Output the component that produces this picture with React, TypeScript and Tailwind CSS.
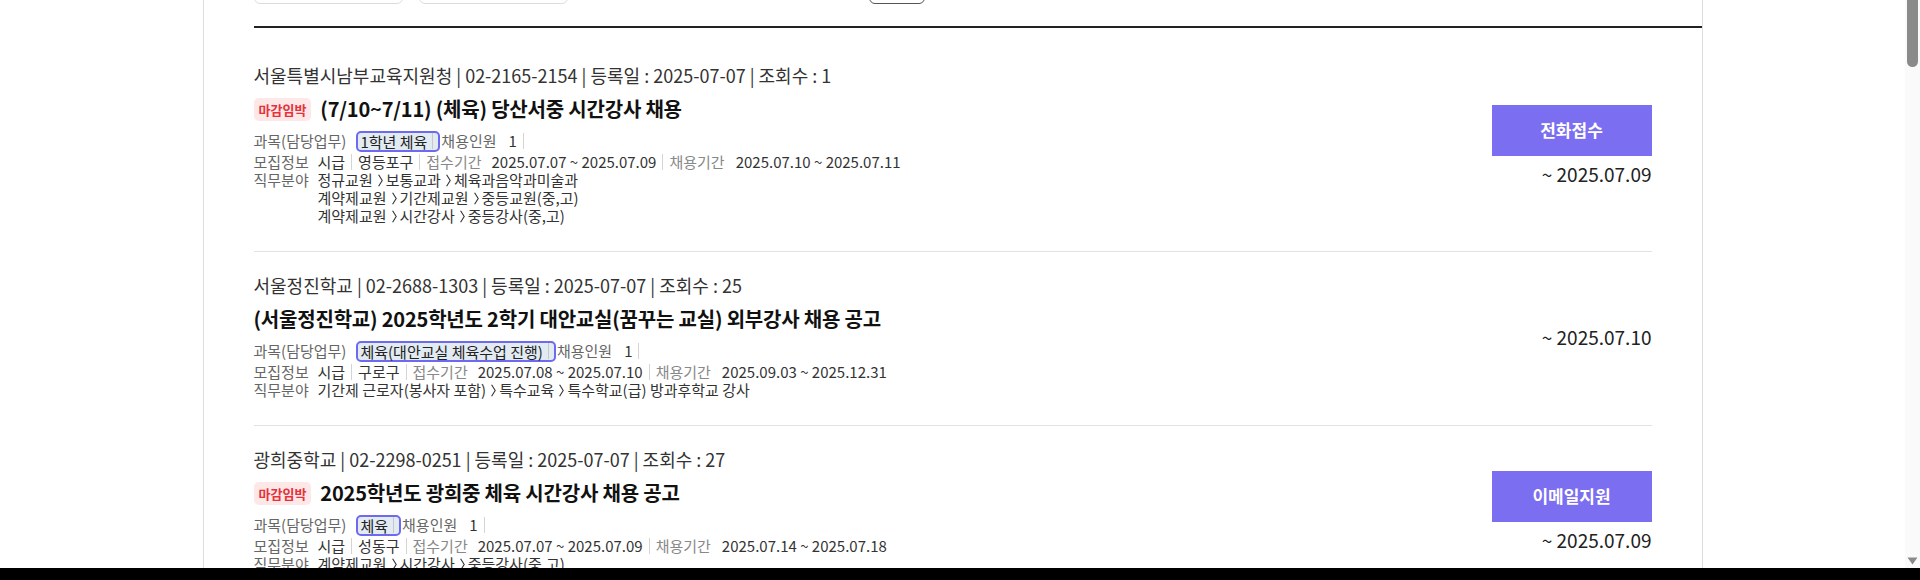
import React from "react";

type Job = {
  meta: string;
  urgent: boolean;
  title: string;
  subject: string;
  count: string;
  pay: string;
  region: string;
  apply: string;
  work: string;
  fields: string[][];
  action?: string;
  deadline: string;
};

const jobs: Job[] = [
  {
    meta: "서울특별시남부교육지원청 | 02-2165-2154 | 등록일 : 2025-07-07 | 조회수 : 1",
    urgent: true,
    title: "(7/10~7/11) (체육) 당산서중 시간강사 채용",
    subject: "1학년 체육",
    count: "1",
    pay: "시급",
    region: "영등포구",
    apply: "2025.07.07 ~ 2025.07.09",
    work: "2025.07.10 ~ 2025.07.11",
    fields: [
      ["정규교원", "보통교과", "체육과음악과미술과"],
      ["계약제교원", "기간제교원", "중등교원(중,고)"],
      ["계약제교원", "시간강사", "중등강사(중,고)"],
    ],
    action: "전화접수",
    deadline: "~ 2025.07.09",
  },
  {
    meta: "서울정진학교 | 02-2688-1303 | 등록일 : 2025-07-07 | 조회수 : 25",
    urgent: false,
    title: "(서울정진학교) 2025학년도 2학기 대안교실(꿈꾸는 교실) 외부강사 채용 공고",
    subject: "체육(대안교실 체육수업 진행)",
    count: "1",
    pay: "시급",
    region: "구로구",
    apply: "2025.07.08 ~ 2025.07.10",
    work: "2025.09.03 ~ 2025.12.31",
    fields: [["기간제 근로자(봉사자 포함)", "특수교육", "특수학교(급) 방과후학교 강사"]],
    deadline: "~ 2025.07.10",
  },
  {
    meta: "광희중학교 | 02-2298-0251 | 등록일 : 2025-07-07 | 조회수 : 27",
    urgent: true,
    title: "2025학년도 광희중 체육 시간강사 채용 공고",
    subject: "체육",
    count: "1",
    pay: "시급",
    region: "성동구",
    apply: "2025.07.07 ~ 2025.07.09",
    work: "2025.07.14 ~ 2025.07.18",
    fields: [["계약제교원", "시간강사", "중등강사(중,고)"]],
    action: "이메일지원",
    deadline: "~ 2025.07.09",
  },
];

function Sep() {
  return <span className="inline-block w-px h-[16px] bg-[#d4d4d4] mx-[6px]" />;
}

function Chevron() {
  return (
    <svg width="5" height="13" viewBox="0 0 5 13" className="ml-[5px] mr-[3px] shrink-0">
      <path d="M0.6 0.8 L4.2 6.5 L0.6 12.2" fill="none" stroke="#333" strokeWidth="1.1" />
    </svg>
  );
}

function JobItem({ job }: { job: Job }) {
  return (
    <div className="flex border-b border-[#e2e2e2] pt-[22px] pb-[26px]">
      <div className="flex-1 min-w-0">
        {/* meta */}
        <div className="h-[22px] leading-[22px] text-[18px] text-[#333]">{job.meta}</div>

        {/* title */}
        <div className="mt-[10px] h-[26px] flex items-center">
          {job.urgent && (
            <span className="mr-[9px] h-[23px] px-[5px] rounded-[5px] bg-[#fde7e7] text-[#e5323b] text-[13px] font-bold leading-[23px]">
              마감임박
            </span>
          )}
          <span className="text-[20px] font-bold text-[#111] tracking-[-0.2px] leading-[26px]">{job.title}</span>
        </div>

        {/* 과목 */}
        <div className="mt-[7px] h-[24px] flex items-center text-[15px]">
          <span className="text-[#666]">과목(담당업무)</span>
          <span className="ml-[10px] h-[21px] flex items-center rounded-[5px] border-2 border-[#6d69f0] bg-[#e2eaf2] pl-[2px] pr-[5px]">
            <span className="text-[#222] leading-[17px]">{job.subject}</span>
            <span className="inline-block w-px h-[16px] bg-[#c8c8c8] ml-[5px]" />
          </span>
          <span className="ml-[1px] text-[#666]">채용인원</span>
          <span className="ml-[12px] text-[#333]">{job.count}</span>
          <Sep />
        </div>

        {/* 모집정보 */}
        <div className="h-[18px] flex items-center text-[15px]">
          <span className="w-[64px] text-[#666]">모집정보</span>
          <span className="text-[#333]">{job.pay}</span>
          <Sep />
          <span className="text-[#333]">{job.region}</span>
          <Sep />
          <span className="text-[#888]">접수기간</span>
          <span className="ml-[10px] text-[#333]">{job.apply}</span>
          <Sep />
          <span className="text-[#888]">채용기간</span>
          <span className="ml-[11px] text-[#333]">{job.work}</span>
        </div>

        {/* 직무분야 */}
        <div className="flex text-[15px]">
          <span className="w-[64px] shrink-0 h-[18px] leading-[18px] text-[#666]">직무분야</span>
          <div className="flex flex-col">
            {job.fields.map((f, i) => (
              <div key={i} className="h-[18px] flex items-center text-[#333]">
                {f.map((part, j) => (
                  <React.Fragment key={j}>
                    {j > 0 && <Chevron />}
                    <span>{part}</span>
                  </React.Fragment>
                ))}
              </div>
            ))}
          </div>
        </div>
      </div>

      {/* right column */}
      <div className="w-[160px] shrink-0 flex flex-col items-end justify-center">
        {job.action && (
          <button className="w-[160px] h-[51px] mb-[7px] bg-[#7b6ef0] text-white text-[17px] font-bold">
            {job.action}
          </button>
        )}
        <div className="h-[22px] leading-[22px] text-[19px] text-[#222]">{job.deadline}</div>
      </div>
    </div>
  );
}

export default function App() {
  return (
    <div
      className="h-[580px] flex flex-col overflow-hidden bg-white"
      style={{ fontFamily: '"Noto Sans CJK KR", "Noto Sans", sans-serif' }}
    >
      <div className="flex-1 min-h-0 flex">
        <main className="flex-1 min-w-0 overflow-hidden">
          <div className="mx-auto w-[1500px] h-full border-x border-[#dedede] pl-[50px]">
            {/* filter bar, scrolled mostly out of view */}
            <div className="h-[4px] overflow-hidden flex items-end">
              <div className="w-[149px] h-[40px] shrink-0 border border-[#dcdcdc] rounded-[6px]" />
              <div className="ml-[16px] w-[149px] h-[40px] shrink-0 border border-[#dcdcdc] rounded-[6px]" />
              <div className="ml-[301px] w-[56px] h-[40px] shrink-0 border border-[#555] rounded-[6px]" />
            </div>
            <div className="mt-[22px] h-[2px] bg-[#222]" />

            {/* list */}
            <div className="pt-[14px] pr-[50px]">
              {jobs.map((job, i) => (
                <JobItem key={i} job={job} />
              ))}
            </div>
          </div>
        </main>

        {/* scrollbar */}
        <div className="w-[15px] shrink-0 bg-[#fafafa] flex flex-col items-center justify-between">
          <div className="w-[11px] h-[67px] rounded-b-[6px] bg-[#8a8a8a]" />
          <svg width="11" height="8" viewBox="0 0 11 8" className="mb-[3px]">
            <path d="M0.5 0.5 H10.5 L5.5 7.5 Z" fill="#8a8a8a" />
          </svg>
        </div>
      </div>
      <div className="h-[12px] bg-black shrink-0" />
    </div>
  );
}
